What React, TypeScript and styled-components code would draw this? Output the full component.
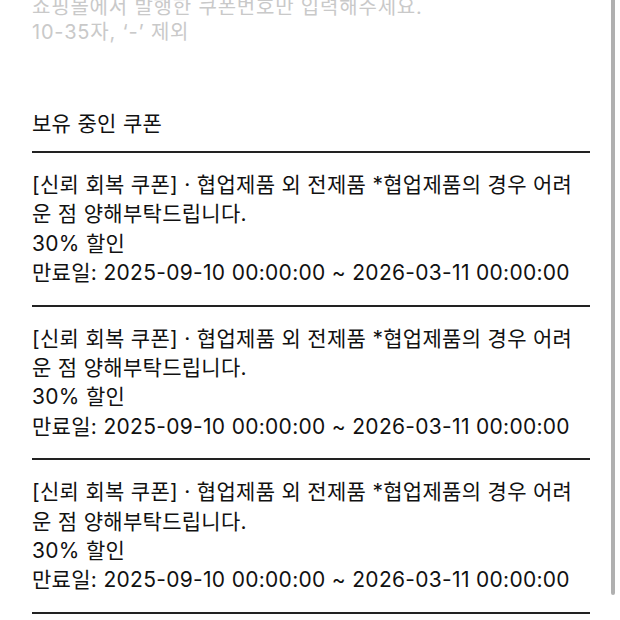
import styled, { createGlobalStyle } from 'styled-components'

const GlobalStyle = createGlobalStyle`
  html, body {
    margin: 0;
    padding: 0;
    background: #fff;
  }
  body {
    font-family: Inter, "Noto Sans CJK KR", sans-serif;
    color: #111;
    overflow: hidden;
  }
`

const Screen = styled.div`
  position: relative;
  width: 620px;
  height: 620px;
  overflow: hidden;
`

const Content = styled.main`
  display: flex;
  flex-direction: column;
  padding: 0 30px 0 32px;
  margin-top: -5px;
`

const Hint = styled.p`
  margin: 0;
  font-size: 20px;
  line-height: 25px;
  letter-spacing: 0.8px;
  color: #c9c9c9;
`

const SectionTitle = styled.h2`
  margin: 64px 0 0;
  font-size: 21px;
  font-weight: 400;
  line-height: 30px;
  letter-spacing: 0.3px;
  padding-bottom: 12px;
  border-bottom: 2px solid #222;
`

const CouponList = styled.ul`
  list-style: none;
  margin: 0;
  padding: 0;
`

const Coupon = styled.li`
  padding: 17px 0 17px;
  border-bottom: 2px solid #222;
  font-size: 21px;
  line-height: 29.4px;
  letter-spacing: 0.3px;
`

const Line = styled.div`
  padding-right: 4px;
  word-break: normal;
`

// overlay scroll thumb on the right edge
const ScrollThumb = styled.div`
  position: absolute;
  top: -10px;
  right: 5px;
  width: 4px;
  height: 605px;
  border-radius: 2px;
  background: #b0b0b0;
`

const coupons = [1, 2, 3].map((id) => ({
  id,
  title: '[신뢰 회복 쿠폰] · 협업제품 외 전제품 *협업제품의 경우 어려운 점 양해부탁드립니다.',
  discount: '30% 할인',
  expiry: '만료일: 2025-09-10 00:00:00 ~ 2026-03-11 00:00:00',
}))

export default function App() {
  return (
    <Screen>
      <GlobalStyle />
      <Content>
        <Hint>쇼핑몰에서 발행한 쿠폰번호만 입력해주세요.</Hint>
        <Hint>10-35자, ‘-’ 제외</Hint>
        <SectionTitle>보유 중인 쿠폰</SectionTitle>
        <CouponList>
          {coupons.map((c) => (
            <Coupon key={c.id}>
              <Line>{c.title}</Line>
              <Line>{c.discount}</Line>
              <Line>{c.expiry}</Line>
            </Coupon>
          ))}
        </CouponList>
      </Content>
      <ScrollThumb />
    </Screen>
  )
}
